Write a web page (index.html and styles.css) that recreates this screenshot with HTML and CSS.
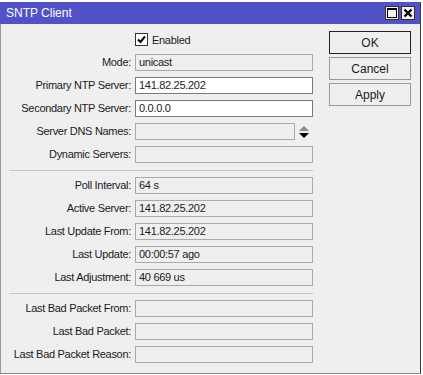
FILE: index.html
```html
<!DOCTYPE html>
<html>
<head>
<meta charset="utf-8">
<link rel="stylesheet" href="styles.css">
</head>
<body>
<div class="window">
  <div class="titlebar">
    <span class="title">SNTP Client</span>
    <div class="tbtns">
      <span class="tbtn"><svg width="14" height="14" viewBox="0 0 14 14"><rect x="2.5" y="2.5" width="9" height="9" fill="none" stroke="#000" stroke-width="1"/><line x1="2.5" y1="3" x2="11.5" y2="3" stroke="#000" stroke-width="2"/></svg></span>
      <span class="tbtn"><svg width="14" height="14" viewBox="0 0 14 14"><path d="M3.5 3.5 L10.5 10.5 M10.5 3.5 L3.5 10.5" stroke="#000" stroke-width="2.2" fill="none"/></svg></span>
    </div>
  </div>
  <div class="content">
    <div class="form">
      <div class="lbl"></div>
      <div class="check">
        <span class="box"><svg width="11" height="11" viewBox="0 0 11 11"><path d="M2 5.5 L4.5 8 L9 2.5" stroke="#000" stroke-width="2" fill="none"/></svg></span>
        <span>Enabled</span>
      </div>

      <div class="lbl">Mode:</div><div class="field ro">unicast</div>
      <div class="lbl">Primary NTP Server:</div><div class="field">141.82.25.202</div>
      <div class="lbl">Secondary NTP Server:</div><div class="field">0.0.0.0</div>
      <div class="lbl">Server DNS Names:</div>
      <div class="fieldrow">
        <div class="field ro grow"></div>
        <span class="spin"><svg width="12" height="14" viewBox="0 0 12 14"><path d="M1 6 L6 1 L11 6 Z" fill="#8a8a8a"/><path d="M1 8 L11 8 L6 13 Z" fill="#000"/></svg></span>
      </div>
      <div class="lbl">Dynamic Servers:</div><div class="field ro"></div>

      <div class="sep"></div>

      <div class="lbl">Poll Interval:</div><div class="field ro">64 s</div>
      <div class="lbl">Active Server:</div><div class="field ro">141.82.25.202</div>
      <div class="lbl">Last Update From:</div><div class="field ro">141.82.25.202</div>
      <div class="lbl">Last Update:</div><div class="field ro">00:00:57 ago</div>
      <div class="lbl">Last Adjustment:</div><div class="field ro">40 669 us</div>

      <div class="sep"></div>

      <div class="lbl">Last Bad Packet From:</div><div class="field ro"></div>
      <div class="lbl">Last Bad Packet:</div><div class="field ro"></div>
      <div class="lbl">Last Bad Packet Reason:</div><div class="field ro"></div>
    </div>
    <div class="buttons">
      <div class="btn default">OK</div>
      <div class="btn">Cancel</div>
      <div class="btn">Apply</div>
    </div>
  </div>
</div>
</body>
</html>
```
FILE: styles.css
```css
html, body {
  margin: 0;
  padding: 0;
  background: #ffffff;
}
body {
  font-family: "Liberation Sans", Arial, sans-serif;
  font-size: 11px;
  color: #1a1a1a;
}
.window {
  margin-top: 2px;
  width: 420px;
  border-right: 1px solid #3a3a3a;
  border-bottom: 1px solid #8a8a8a;
  background: #f0eff0;
  display: flex;
  flex-direction: column;
}
.titlebar {
  flex: none;
  height: 22px;
  background: #5151c8;
  display: flex;
  align-items: center;
  justify-content: space-between;
  padding: 0 5px 0 6px;
}
.title {
  color: #ffffff;
  font-size: 12px;
}
.tbtns {
  display: flex;
  gap: 2px;
}
.tbtn {
  width: 14px;
  height: 14px;
  background: #f0f0f0;
  border: 1px solid #303030;
  box-sizing: border-box;
  display: flex;
  align-items: center;
  justify-content: center;
}
.tbtn svg {
  display: block;
  flex: none;
}
.content {
  display: flex;
  align-items: flex-start;
  padding: 7px 0 10px 0;
  border-left: 1px solid #9a9a9a;
}
.form {
  display: grid;
  grid-template-columns: 122px 178px;
  column-gap: 4px;
  row-gap: 6px;
  padding-left: 8px;
  letter-spacing: -0.3px;
}
.lbl {
  text-align: right;
  height: 17px;
  line-height: 17px;
  white-space: nowrap;
}
.field {
  height: 17px;
  box-sizing: border-box;
  border: 1px solid #7a7a7a;
  background: #ffffff;
  padding-left: 3px;
  line-height: 15px;
  white-space: nowrap;
}
.field.ro {
  background: #f0eff0;
  border-color: #a9a9a9;
}
.fieldrow {
  display: flex;
  align-items: center;
  height: 17px;
}
.grow {
  flex: 1;
}
.spin {
  width: 18px;
  display: flex;
  justify-content: center;
}
.spin svg {
  display: block;
}
.check {
  display: flex;
  align-items: center;
  gap: 4px;
  height: 17px;
}
.box {
  width: 13px;
  height: 13px;
  box-sizing: border-box;
  border: 1px solid #333333;
  background: #ffffff;
  display: flex;
  align-items: center;
  justify-content: center;
}
.box svg {
  display: block;
}
.sep {
  grid-column: 1 / span 2;
  height: 1px;
  margin-top: 1px;
  background: #c4c4c4;
}
.buttons {
  display: flex;
  flex-direction: column;
  gap: 3px;
  margin-left: 16px;
  width: 82px;
}
.btn {
  height: 23px;
  box-sizing: border-box;
  border: 1px solid #9a9a9a;
  background: #f0eff0;
  display: flex;
  align-items: center;
  justify-content: center;
  font-size: 12px;
}
.btn.default {
  border-color: #222222;
}
```
